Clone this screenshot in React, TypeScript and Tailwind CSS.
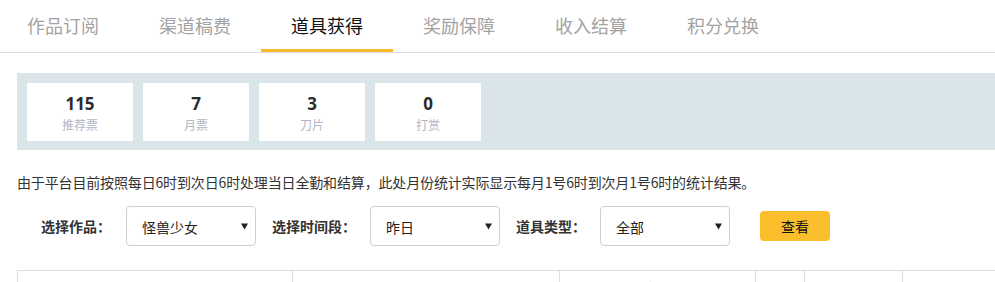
const tabs = ['作品订阅', '渠道稿费', '道具获得', '奖励保障', '收入结算', '积分兑换'];

const stats = [
  { value: '115', label: '推荐票' },
  { value: '7', label: '月票' },
  { value: '3', label: '刀片' },
  { value: '0', label: '打赏' },
];

const columns = [
  { title: '获得时间', width: 'w-[275px]' },
  { title: '用户昵称', width: 'w-[267px]' },
  { title: '道具', width: 'w-[196px]' },
  { title: '数量', width: 'w-[49px]' },
  { title: '单价', width: 'w-[98px]' },
  { title: '总价', width: 'w-[98px]' },
];

function FakeSelect({ value }: { value: string }) {
  return (
    <div className="flex h-[40px] w-[130px] items-center justify-between rounded-[4px] border border-[#cfcfcf] bg-white pl-[15px] pr-[7px]">
      <span className="pt-[3px] text-[14px] text-[#222]">{value}</span>
      <svg width="7" height="7" viewBox="0 0 7 7" className="mt-[1px]">
        <path d="M0 0.5h7L3.5 6.5z" fill="#222" />
      </svg>
    </div>
  );
}

export default function App() {
  return (
    <div className="h-[282px] w-[995px] overflow-hidden bg-white font-['Noto_Sans_CJK_SC','Microsoft_YaHei',sans-serif] text-[#333]">
      {/* tabs */}
      <div className="flex h-[53px] border-b border-[#dedede]">
        <div className="ml-[-3px] flex">
          {tabs.map((tab, i) => (
            <div
              key={tab}
              className={
                i === 2
                  ? 'flex h-[52px] w-[132px] items-center justify-center border-b-[3px] border-[#f7b92d] pt-[1px] text-[18px] text-[#111]'
                  : 'flex h-[52px] w-[132px] items-center justify-center pb-[2px] text-[18px] text-[#a3a3a3]'
              }
            >
              {tab}
            </div>
          ))}
        </div>
      </div>

      {/* summary */}
      <div className="ml-[17px] mt-[20px] flex gap-[10px] bg-[#dae5e9] pb-[9px] pl-[10px] pt-[10px]">
        {stats.map((s) => (
          <div key={s.label} className="flex h-[58px] w-[106px] flex-col items-center bg-white pt-[9px]">
            <span className="font-['Open_Sans',sans-serif] text-[17px] font-bold leading-[24px] text-[#2b2b2b]">{s.value}</span>
            <span className="text-[12px] leading-[18px] text-[#b3b6c4]">{s.label}</span>
          </div>
        ))}
      </div>

      <p className="ml-[17px] mt-[22px] text-[14px] leading-[20px] tracking-[-0.15px] text-[#333]">
        由于平台目前按照每日6时到次日6时处理当日全勤和结算，此处月份统计实际显示每月1号6时到次月1号6时的统计结果。
      </p>

      {/* filters */}
      <div className="mt-[14px] flex items-center pl-[41px]">
        <span className="w-[85px] text-[14px] font-bold text-[#333]">选择作品：</span>
        <FakeSelect value="怪兽少女" />
        <span className="ml-[16px] w-[98px] text-[14px] font-bold text-[#333]">选择时间段：</span>
        <FakeSelect value="昨日" />
        <span className="ml-[16px] w-[84px] text-[14px] font-bold text-[#333]">道具类型：</span>
        <FakeSelect value="全部" />
        <button className="ml-[30px] h-[30px] w-[70px] rounded-[4px] bg-[#fbbf2d] text-[14px] text-[#111]">查看</button>
      </div>

      {/* table */}
      <div className="ml-[17px] mt-[24px] flex w-[1100px] border-l border-t border-[#dedede]">
        {columns.map((c) => (
          <div key={c.title} className={`${c.width} h-[40px] shrink-0 border-r border-[#dedede] pt-[7px] text-center text-[14px] font-bold text-[#333]`}>
            {c.title}
          </div>
        ))}
      </div>
    </div>
  );
}
